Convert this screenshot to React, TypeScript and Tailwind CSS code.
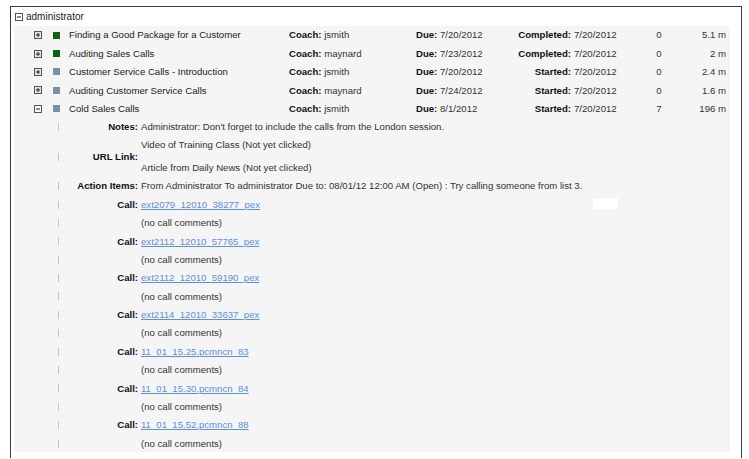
import React from "react";

type Item = {
  title: string;
  color: string;
  coach: string;
  due: string;
  statusLabel: string;
  statusDate: string;
  count: string;
  dur: string;
  open?: boolean;
};

const items: Item[] = [
  { title: "Finding a Good Package for a Customer", color: "#0b640b", coach: "jsmith", due: "7/20/2012", statusLabel: "Completed:", statusDate: "7/20/2012", count: "0", dur: "5.1 m" },
  { title: "Auditing Sales Calls", color: "#0b640b", coach: "maynard", due: "7/23/2012", statusLabel: "Completed:", statusDate: "7/20/2012", count: "0", dur: "2 m" },
  { title: "Customer Service Calls - Introduction", color: "#7d8fa3", coach: "jsmith", due: "7/20/2012", statusLabel: "Started:", statusDate: "7/20/2012", count: "0", dur: "2.4 m" },
  { title: "Auditing Customer Service Calls", color: "#7d8fa3", coach: "maynard", due: "7/24/2012", statusLabel: "Started:", statusDate: "7/20/2012", count: "0", dur: "1.6 m" },
  { title: "Cold Sales Calls", color: "#7d8fa3", coach: "jsmith", due: "8/1/2012", statusLabel: "Started:", statusDate: "7/20/2012", count: "7", dur: "196 m", open: true },
];

const calls = [
  "ext2079_12010_38277_pex",
  "ext2112_12010_57765_pex",
  "ext2112_12010_59190_pex",
  "ext2114_12010_33637_pex",
  "11_01_15.25.pcmncn_83",
  "11_01_15.30.pcmncn_84",
  "11_01_15.52.pcmncn_88",
];

function ToggleBox({ open }: { open?: boolean }) {
  return (
    <svg width="8" height="8" viewBox="0 0 8 8" className="block shrink-0">
      <rect x="0.5" y="0.5" width="7" height="7" fill={open ? "#ffffff" : "#e4e4e4"} stroke="#555" />
      <line x1="2" y1="4" x2="6" y2="4" stroke="#222" />
      {!open && <line x1="4" y1="2" x2="4" y2="6" stroke="#222" />}
    </svg>
  );
}

function Tick() {
  return <span className="block w-px h-[8px] bg-[#bcc4cf] ml-[44px] shrink-0" />;
}

function DetailRow({ label, children }: { label?: string; children?: React.ReactNode }) {
  return (
    <div className="flex items-center h-[18.4px] relative">
      <Tick />
      <div className="w-[79px] text-right font-bold text-[#111] shrink-0">{label}</div>
      <div className="pl-[3px]">{children}</div>
    </div>
  );
}

export default function App() {
  return (
    <div className="w-[749px] h-[459px] bg-white pt-[6px] pl-[10px] text-[9.6px] text-[#333] leading-none" style={{ fontFamily: '"Liberation Sans", Arial, sans-serif' }}>
      <div className="w-[732px] h-[452px] border-l border-t border-r border-[#3c3c3c] pl-[3px]">
        {/* header */}
        <div className="flex items-center h-[19px] pl-[1px] gap-[3px] text-[10px] text-[#222]">
          <ToggleBox open />
          <span>administrator</span>
        </div>

        {/* panel */}
        <div className="w-[716px] h-[426px] bg-[#f5f5f5]">
          {items.map((it) => (
            <div key={it.title} className="flex items-center h-[18.4px]">
              <div className="w-[20px] shrink-0" />
              <ToggleBox open={it.open} />
              <span className="ml-[11px] w-[7px] h-[7px] shrink-0" style={{ background: it.color }} />
              <span className="ml-[9px] w-[220px] shrink-0 text-[#222]">{it.title}</span>
              <span className="w-[127px] shrink-0">
                <b className="text-[#111]">Coach:</b> {it.coach}
              </span>
              <span className="w-[74px] shrink-0">
                <b className="text-[#111]">Due:</b> {it.due}
              </span>
              <span className="w-[81px] shrink-0 text-right font-bold text-[#111]">{it.statusLabel}</span>
              <span className="w-[66px] shrink-0 pl-[3px]">{it.statusDate}</span>
              <span className="w-[44px] shrink-0 text-center">{it.count}</span>
              <span className="w-[45px] shrink-0 text-right">{it.dur}</span>
            </div>
          ))}

          <DetailRow label="Notes:">
            Administrator: Don't forget to include the calls from the London session.
          </DetailRow>
          <div className="flex items-center h-[40.6px]">
            <Tick />
            <div className="w-[79px] text-right font-bold text-[#111] shrink-0">URL Link:</div>
            <div className="pl-[3px] flex flex-col">
              <div className="h-[17px] flex items-center">Video of Training Class (Not yet clicked)</div>
              <div className="h-[5px]" />
              <div className="h-[18px] flex items-center">Article from Daily News (Not yet clicked)</div>
            </div>
          </div>
          <DetailRow label="Action Items:">
            From Administrator To administrator Due to: 08/01/12 12:00 AM (Open) : Try calling someone from list 3.
          </DetailRow>

          {calls.map((c, i) => (
            <React.Fragment key={c}>
              <DetailRow label="Call:">
                <a href="#" className="text-[#5d8fdc] underline underline-offset-1">{c}</a>
                {i === 0 && <span className="absolute left-[579px] top-[3px] w-[25px] h-[11px] bg-white" />}
              </DetailRow>
              <DetailRow>(no call comments)</DetailRow>
            </React.Fragment>
          ))}
        </div>
      </div>
    </div>
  );
}
